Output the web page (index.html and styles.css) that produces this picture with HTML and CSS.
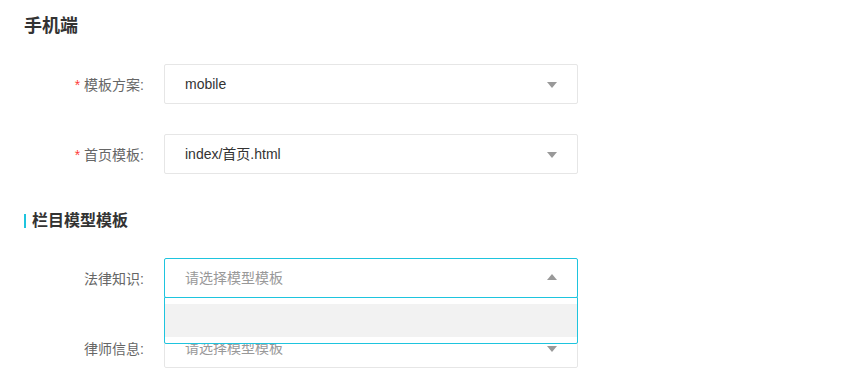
FILE: index.html
```html
<!DOCTYPE html>
<html lang="zh-CN">
<head>
    <meta charset="UTF-8">
    <meta name="viewport" content="width=device-width, initial-scale=1.0">
    <title>模板设置</title>
    <link rel="stylesheet" href="styles.css">
</head>
<body>
    <div class="page">
        <h3 class="block-title">手机端</h3>

        <div class="form-item">
            <label class="form-label"><span class="required">*</span> 模板方案:</label>
            <div class="select">
                <div class="select-title">mobile</div>
                <i class="select-arrow"></i>
            </div>
        </div>

        <div class="form-item">
            <label class="form-label"><span class="required">*</span> 首页模板:</label>
            <div class="select">
                <div class="select-title">index/首页.html</div>
                <i class="select-arrow"></i>
            </div>
        </div>

        <h3 class="section-title">栏目模型模板</h3>

        <div class="form-item">
            <label class="form-label">法律知识:</label>
            <div class="select is-open">
                <div class="select-title placeholder">请选择模型模板</div>
                <i class="select-arrow"></i>
                <dl class="select-options">
                    <dd class="option-empty"></dd>
                </dl>
            </div>
        </div>

        <div class="form-item">
            <label class="form-label">律师信息:</label>
            <div class="select">
                <div class="select-title placeholder">请选择模型模板</div>
                <i class="select-arrow"></i>
            </div>
        </div>
    </div>
</body>
</html>
```

FILE: styles.css
```css
body { margin: 0; background: #fff; font-family: "Liberation Sans", Arial, "Noto Sans CJK SC", sans-serif; font-size: 14px; color: #333; }
.page { padding: 14px 24px 0; }

.block-title { margin: 0 0 26px; font-size: 18px; line-height: 24px; font-weight: bold; color: #333; }
.section-title { margin: 35px 0 25px; font-size: 16px; line-height: 24px; font-weight: bold; color: #333; display: flex; align-items: center; }
.section-title::before { content: ""; width: 2px; height: 14px; background: #1ec4de; margin-right: 6px; }

.form-item { display: flex; align-items: center; height: 40px; margin-bottom: 30px; }
.form-item:last-child { margin-bottom: 0; }
.form-label { width: 140px; box-sizing: border-box; padding-right: 20px; text-align: right; color: #666; }
.required { color: #ff3b3b; }

.select { position: relative; width: 414px; height: 40px; box-sizing: border-box; border: 1px solid #e6e6e6; border-radius: 2px; background: #fff; }
.select-title { padding-left: 20px; line-height: 38px; color: #333; }
.select-title.placeholder { color: #999; }
.select-arrow { position: absolute; right: 20px; top: 17px; width: 0; height: 0; border-style: solid; border-width: 6px 5px 0; border-color: #999 transparent transparent; }

.select.is-open { border-color: #1ec4de; z-index: 2; }
.select.is-open .select-arrow { top: 15px; border-width: 0 5px 6px; border-color: transparent transparent #999; }
.select-options { position: absolute; left: -1px; right: -1px; top: 38px; margin: 0; padding: 6px 0; background: #fff; border: 1px solid #1ec4de; border-radius: 0 0 2px 2px; }
.option-empty { margin: 0; height: 33px; background: #f2f2f2; }
```
